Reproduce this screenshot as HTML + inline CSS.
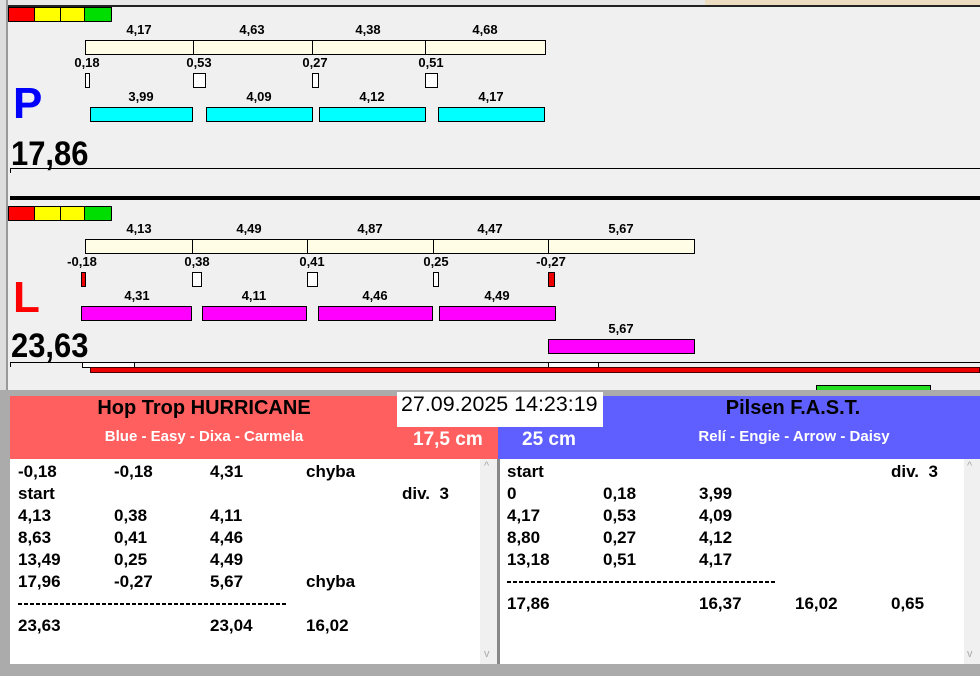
<!DOCTYPE html>
<html><head><meta charset="utf-8"><style>
*{margin:0;padding:0;box-sizing:border-box}
body{width:980px;height:676px;overflow:hidden;background:#f0f0f0;position:relative;font-family:"Liberation Sans",Arial,sans-serif;font-weight:bold}
div{position:absolute}
.t{font-size:13px;color:#000;white-space:nowrap;transform:translateX(-50%)}
.cb{background:#fffde6;border:1px solid #000}
.b{border:1px solid #000}
.row{font-size:17px;color:#000;white-space:nowrap}
.dash{height:2px;background:repeating-linear-gradient(90deg,#000 0 4px,transparent 4px 6px)}
.big{font-size:34px;line-height:36px;transform:scaleX(0.91);transform-origin:left;white-space:nowrap}
</style></head><body>
<div style="left:0;top:0;width:980px;height:5px;background:#e8e8e8"></div>
<div style="left:705px;top:0;width:275px;height:5px;background:#ecdcc0"></div>
<div style="left:0;top:5px;width:980px;height:2px;background:#222"></div>
<div style="left:0;top:0;width:8px;height:392px;background:#ddd;border-right:2px solid #999"></div>

<div class="b" style="left:8px;top:7px;width:27px;height:15px;background:#f00"></div>
<div class="b" style="left:34px;top:7px;width:27px;height:15px;background:#ff0"></div>
<div class="b" style="left:60px;top:7px;width:25px;height:15px;background:#ff0"></div>
<div class="b" style="left:84px;top:7px;width:28px;height:15px;background:#0d0"></div>

<div class="t" style="left:139px;top:22px">4,17</div>
<div class="t" style="left:252px;top:22px">4,63</div>
<div class="t" style="left:368px;top:22px">4,38</div>
<div class="t" style="left:485px;top:22px">4,68</div>
<div class="cb" style="left:85px;top:40px;width:109px;height:15px"></div>
<div class="cb" style="left:193px;top:40px;width:120px;height:15px"></div>
<div class="cb" style="left:312px;top:40px;width:114px;height:15px"></div>
<div class="cb" style="left:425px;top:40px;width:121px;height:15px"></div>
<div class="t" style="left:87px;top:55px">0,18</div>
<div class="t" style="left:199px;top:55px">0,53</div>
<div class="t" style="left:315px;top:55px">0,27</div>
<div class="t" style="left:431px;top:55px">0,51</div>
<div class="b" style="left:85px;top:73px;width:5px;height:15px;background:#fff"></div>
<div class="b" style="left:193px;top:73px;width:13px;height:15px;background:#fff"></div>
<div class="b" style="left:312px;top:73px;width:7px;height:15px;background:#fff"></div>
<div class="b" style="left:425px;top:73px;width:13px;height:15px;background:#fff"></div>
<div class="t" style="left:141px;top:89px">3,99</div>
<div class="t" style="left:259px;top:89px">4,09</div>
<div class="t" style="left:372px;top:89px">4,12</div>
<div class="t" style="left:491px;top:89px">4,17</div>
<div class="b" style="left:90px;top:107px;width:103px;height:15px;background:#0ff"></div>
<div class="b" style="left:206px;top:107px;width:107px;height:15px;background:#0ff"></div>
<div class="b" style="left:319px;top:107px;width:107px;height:15px;background:#0ff"></div>
<div class="b" style="left:438px;top:107px;width:107px;height:15px;background:#0ff"></div>
<div style="left:13px;top:80px;font-size:44px;color:#00f;line-height:48px">P</div>
<div class="big" style="left:11px;top:136px">17,86</div>
<div style="left:10px;top:168px;width:970px;height:1px;background:#000"></div>
<div style="left:10px;top:168px;width:1px;height:5px;background:#000"></div>
<div style="left:10px;top:196px;width:970px;height:4px;background:#000"></div>

<div class="b" style="left:8px;top:206px;width:27px;height:15px;background:#f00"></div>
<div class="b" style="left:34px;top:206px;width:27px;height:15px;background:#ff0"></div>
<div class="b" style="left:60px;top:206px;width:25px;height:15px;background:#ff0"></div>
<div class="b" style="left:84px;top:206px;width:28px;height:15px;background:#0d0"></div>

<div class="t" style="left:139px;top:221px">4,13</div>
<div class="t" style="left:249px;top:221px">4,49</div>
<div class="t" style="left:370px;top:221px">4,87</div>
<div class="t" style="left:490px;top:221px">4,47</div>
<div class="t" style="left:621px;top:221px">5,67</div>
<div class="cb" style="left:85px;top:239px;width:108px;height:15px"></div>
<div class="cb" style="left:192px;top:239px;width:116px;height:15px"></div>
<div class="cb" style="left:307px;top:239px;width:127px;height:15px"></div>
<div class="cb" style="left:433px;top:239px;width:116px;height:15px"></div>
<div class="cb" style="left:548px;top:239px;width:147px;height:15px"></div>
<div class="t" style="left:82px;top:254px">-0,18</div>
<div class="t" style="left:197px;top:254px">0,38</div>
<div class="t" style="left:312px;top:254px">0,41</div>
<div class="t" style="left:436px;top:254px">0,25</div>
<div class="t" style="left:551px;top:254px">-0,27</div>
<div class="b" style="left:81px;top:272px;width:5px;height:15px;background:#e00"></div>
<div class="b" style="left:192px;top:272px;width:10px;height:15px;background:#fff"></div>
<div class="b" style="left:307px;top:272px;width:11px;height:15px;background:#fff"></div>
<div class="b" style="left:433px;top:272px;width:6px;height:15px;background:#fff"></div>
<div class="b" style="left:548px;top:272px;width:7px;height:15px;background:#e00"></div>
<div class="t" style="left:137px;top:288px">4,31</div>
<div class="t" style="left:254px;top:288px">4,11</div>
<div class="t" style="left:375px;top:288px">4,46</div>
<div class="t" style="left:497px;top:288px">4,49</div>
<div class="b" style="left:81px;top:306px;width:111px;height:15px;background:#f0f"></div>
<div class="b" style="left:202px;top:306px;width:105px;height:15px;background:#f0f"></div>
<div class="b" style="left:318px;top:306px;width:115px;height:15px;background:#f0f"></div>
<div class="b" style="left:439px;top:306px;width:117px;height:15px;background:#f0f"></div>
<div class="t" style="left:621px;top:321px">5,67</div>
<div class="b" style="left:548px;top:339px;width:147px;height:15px;background:#f0f"></div>
<div style="left:13px;top:274px;font-size:44px;color:#f00;line-height:48px">L</div>
<div class="big" style="left:11px;top:328px">23,63</div>
<div style="left:10px;top:362px;width:970px;height:1px;background:#000"></div>
<div style="left:10px;top:362px;width:1px;height:5px;background:#000"></div>
<div class="b" style="left:82px;top:362px;width:53px;height:6px;background:#fff"></div>
<div class="b" style="left:548px;top:362px;width:51px;height:6px;background:#fff"></div>
<div style="left:90px;top:367px;width:890px;height:6px;background:#e00;border:1px solid #400"></div>
<div class="b" style="left:816px;top:385px;width:115px;height:6px;background:#2d2"></div>

<div style="left:0;top:390px;width:980px;height:286px;background:#ababab"></div>
<div style="left:10px;top:396px;width:488px;height:63px;background:#ff5f5f"></div>
<div style="left:498px;top:396px;width:482px;height:63px;background:#5f5fff"></div>
<div style="left:397px;top:392px;width:206px;height:35px;background:#fff"></div>
<div style="left:401px;top:392px;font-size:21px;font-weight:normal;line-height:26px;transform:scaleX(1.02);transform-origin:left;white-space:nowrap">27.09.2025 14:23:19</div>
<div style="left:204px;top:396px;font-size:20px;line-height:24px;transform:translateX(-50%);white-space:nowrap">Hop Trop HURRICANE</div>
<div style="left:204px;top:427px;font-size:15px;color:#fff;line-height:20px;transform:translateX(-50%);white-space:nowrap">Blue - Easy - Dixa - Carmela</div>
<div style="left:413px;top:428px;font-size:19px;color:#fff;line-height:24px">17,5 cm</div>
<div style="left:522px;top:428px;font-size:19px;color:#fff;line-height:24px">25 cm</div>
<div style="left:793px;top:396px;font-size:20px;line-height:24px;transform:translateX(-50%);white-space:nowrap">Pilsen F.A.S.T.</div>
<div style="left:794px;top:427px;font-size:15px;color:#fff;line-height:20px;transform:translateX(-50%);white-space:nowrap">Relí - Engie - Arrow - Daisy</div>

<div style="left:10px;top:459px;width:487px;height:205px;background:#fff"></div>
<div style="left:480px;top:459px;width:17px;height:205px;background:#f0f0f0"></div>
<div style="left:497px;top:459px;width:3px;height:205px;background:#888"></div>
<div style="left:500px;top:459px;width:480px;height:205px;background:#fff"></div>
<div style="left:964px;top:459px;width:16px;height:205px;background:#f0f0f0"></div>
<div style="left:484px;top:460px;font-size:11px;color:#aaa;font-weight:normal">^</div>
<div style="left:484px;top:648px;font-size:11px;color:#aaa;font-weight:normal">v</div>
<div style="left:967px;top:460px;font-size:11px;color:#aaa;font-weight:normal">^</div>
<div style="left:967px;top:648px;font-size:11px;color:#aaa;font-weight:normal">v</div>

<div class="row" style="left:18px;top:461px;line-height:22px">
<div style="left:0;top:0">-0,18</div><div style="left:96px;top:0">-0,18</div><div style="left:192px;top:0">4,31</div><div style="left:288px;top:0">chyba</div>
<div style="left:0;top:22px">start</div><div style="left:384px;top:22px">div.&nbsp; 3</div>
<div style="left:0;top:44px">4,13</div><div style="left:96px;top:44px">0,38</div><div style="left:192px;top:44px">4,11</div>
<div style="left:0;top:66px">8,63</div><div style="left:96px;top:66px">0,41</div><div style="left:192px;top:66px">4,46</div>
<div style="left:0;top:88px">13,49</div><div style="left:96px;top:88px">0,25</div><div style="left:192px;top:88px">4,49</div>
<div style="left:0;top:110px">17,96</div><div style="left:96px;top:110px">-0,27</div><div style="left:192px;top:110px">5,67</div><div style="left:288px;top:110px">chyba</div>
<div class="dash" style="left:0;top:142px;width:270px"></div>
<div style="left:0;top:154px">23,63</div><div style="left:192px;top:154px">23,04</div><div style="left:288px;top:154px">16,02</div>
</div>

<div class="row" style="left:507px;top:461px;line-height:22px">
<div style="left:0;top:0">start</div><div style="left:384px;top:0">div.&nbsp; 3</div>
<div style="left:0;top:22px">0</div><div style="left:96px;top:22px">0,18</div><div style="left:192px;top:22px">3,99</div>
<div style="left:0;top:44px">4,17</div><div style="left:96px;top:44px">0,53</div><div style="left:192px;top:44px">4,09</div>
<div style="left:0;top:66px">8,80</div><div style="left:96px;top:66px">0,27</div><div style="left:192px;top:66px">4,12</div>
<div style="left:0;top:88px">13,18</div><div style="left:96px;top:88px">0,51</div><div style="left:192px;top:88px">4,17</div>
<div class="dash" style="left:0;top:120px;width:270px"></div>
<div style="left:0;top:132px">17,86</div><div style="left:192px;top:132px">16,37</div><div style="left:288px;top:132px">16,02</div><div style="left:384px;top:132px">0,65</div>
</div>
</body></html>
